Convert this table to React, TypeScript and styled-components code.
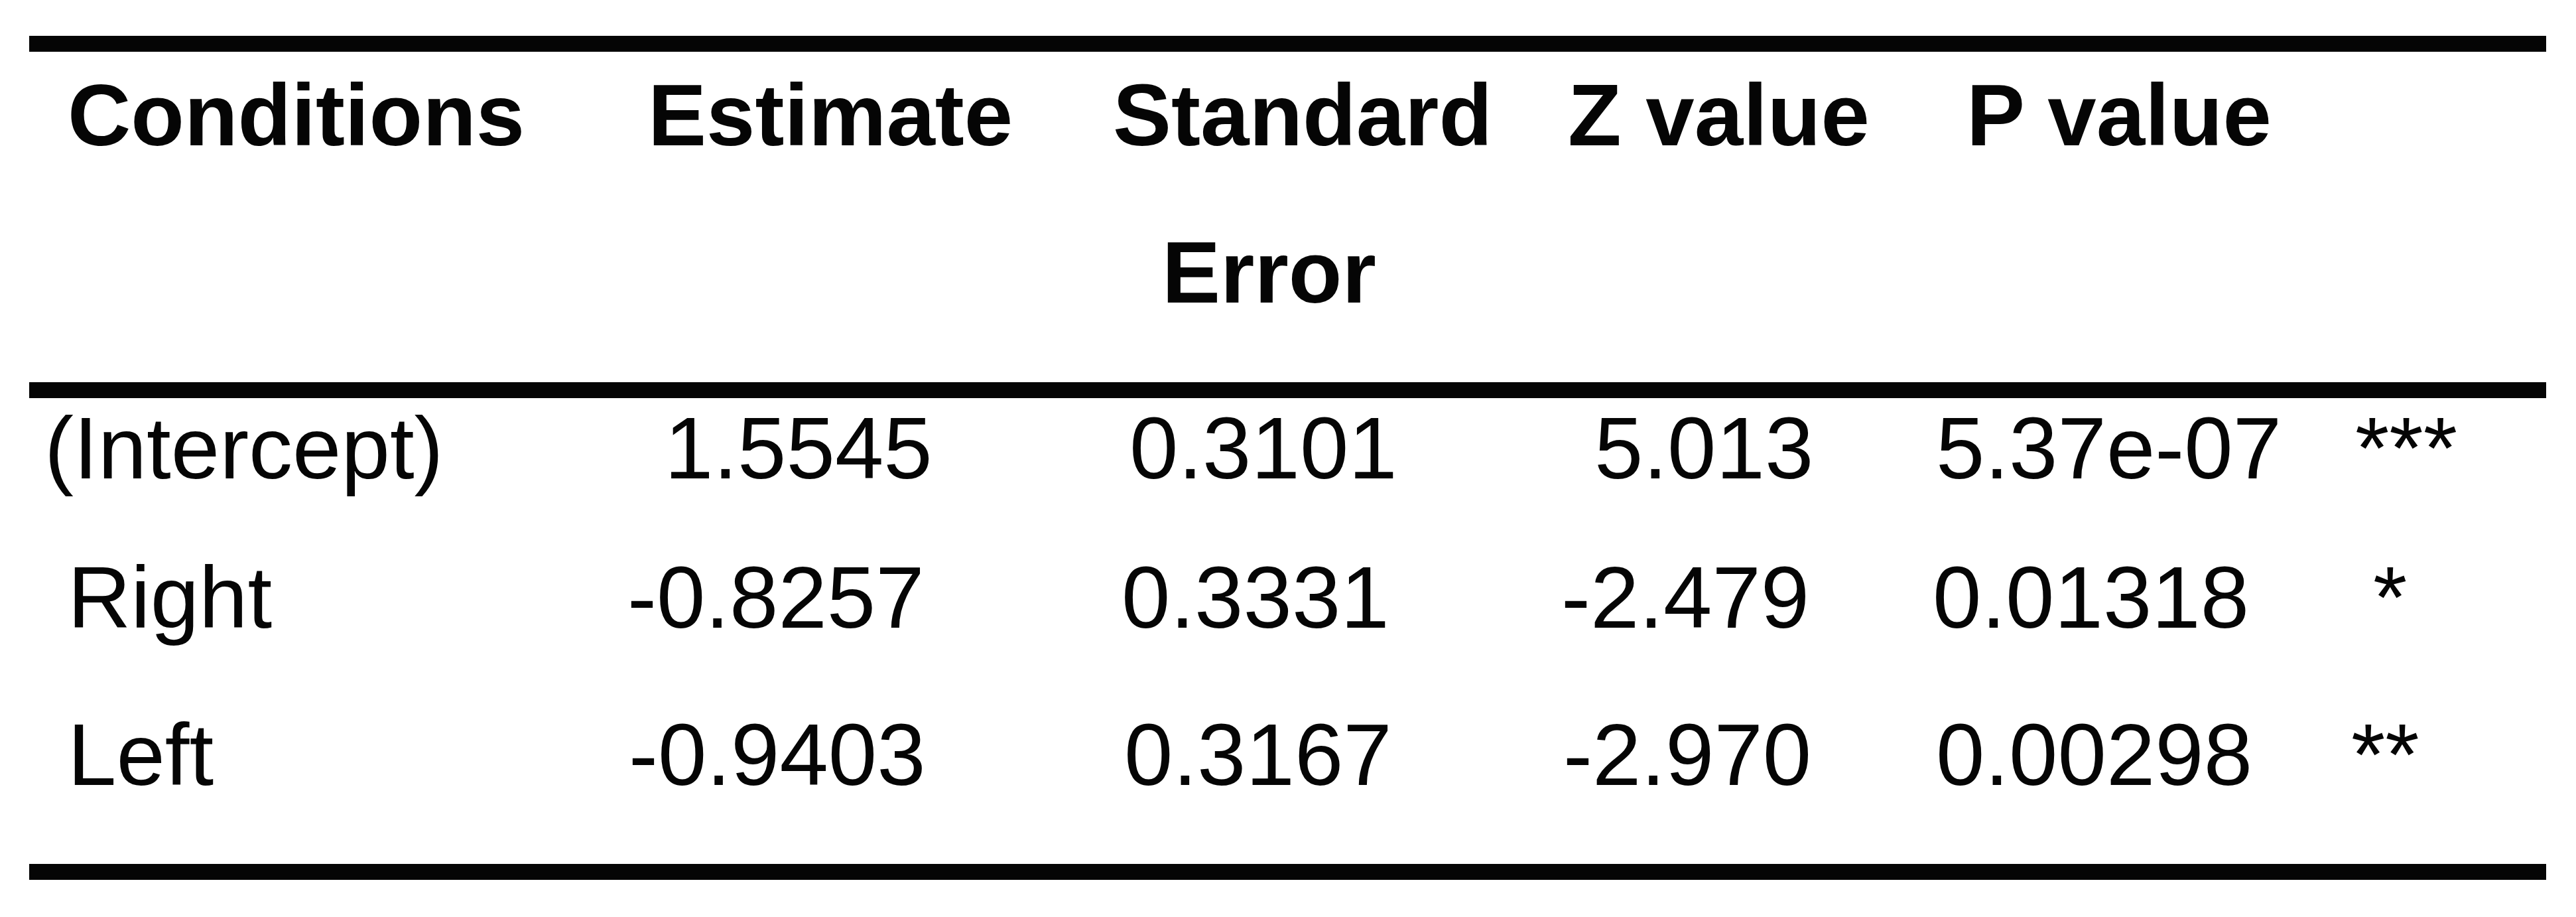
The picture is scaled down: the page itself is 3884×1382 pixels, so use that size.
import React from 'react';
import styled, { createGlobalStyle, css } from 'styled-components';

const GlobalStyle = createGlobalStyle`
  html, body {
    margin: 0;
    padding: 0;
    background: #ffffff;
  }
  body {
    font-family: 'Liberation Sans', Arial, sans-serif;
    color: #050505;
  }
`;

const columns = css`
  display: grid;
  grid-template-columns: 902px 732px 676px 560px 631px 294px;
`;

const Table = styled.section`
  width: 3795px;
  margin: 54px 0 0 44px;
  border-top: 24px solid #050505;
  border-bottom: 24px solid #050505;
  font-size: 132px;
`;

const HeaderRow = styled.div`
  ${columns};
  padding: 22px 0 91px;
  border-bottom: 24px solid #050505;
  font-weight: 700;
`;

const HeadCell = styled.div`
  display: flex;
  flex-direction: column;
  gap: 89px;
`;

const HeadLine = styled.div<{ $indent: number }>`
  padding-left: ${(p) => p.$indent}px;
  line-height: 148px;
  white-space: nowrap;
`;

const Body = styled.div`
  padding-top: 2px;
`;

const Row = styled.div<{ $height: number }>`
  ${columns};
  height: ${(p) => p.$height}px;
`;

const Cell = styled.div<{ $indent: number }>`
  padding-left: ${(p) => p.$indent}px;
  line-height: 148px;
  white-space: nowrap;
  font-weight: 400;
`;

type Line = [string, number];

const header: Line[][] = [
  [['Conditions', 58]],
  [['Estimate', 31]],
  [
    ['Standard', 0],
    ['Error', 74],
  ],
  [['Z value', 10]],
  [['P value', 51]],
  [],
];

const rows: { height: number; cells: Line[] }[] = [
  {
    height: 225,
    cells: [
      ['(Intercept)', 23],
      ['1.5545', 56],
      ['0.3101', 25],
      ['5.013', 50],
      ['5.37e-07', 5],
      ['***', 6],
    ],
  },
  {
    height: 237,
    cells: [
      ['Right', 58],
      ['-0.8257', 0],
      ['0.3331', 13],
      ['-2.479', 0],
      ['0.01318', 0],
      ['*', 33],
    ],
  },
  {
    height: 238,
    cells: [
      ['Left', 58],
      ['-0.9403', 2],
      ['0.3167', 17],
      ['-2.970', 3],
      ['0.00298', 5],
      ['**', 0],
    ],
  },
];

const App: React.FC = () => {
  return (
    <>
      <GlobalStyle />
      <Table>
        <HeaderRow>
          {header.map((lines, i) => (
            <HeadCell key={i}>
              {lines.map(([text, indent]) => (
                <HeadLine key={text} $indent={indent}>
                  {text}
                </HeadLine>
              ))}
            </HeadCell>
          ))}
        </HeaderRow>
        <Body>
          {rows.map((row, r) => (
            <Row key={r} $height={row.height}>
              {row.cells.map(([text, indent], c) => (
                <Cell key={c} $indent={indent}>
                  {text}
                </Cell>
              ))}
            </Row>
          ))}
        </Body>
      </Table>
    </>
  );
};

export default App;
